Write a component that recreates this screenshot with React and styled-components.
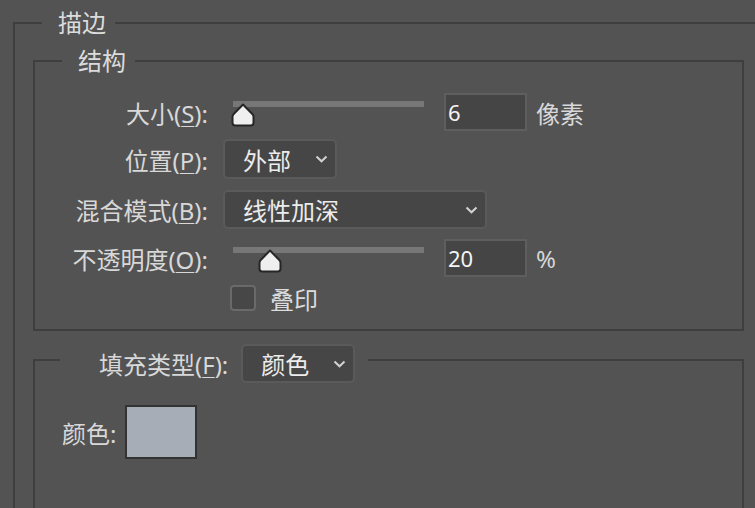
import React from "react";
import styled, { createGlobalStyle } from "styled-components";

const Global = createGlobalStyle`
  html, body { margin: 0; padding: 0; background: #535353; overflow: hidden; }
  body { font-family: "Noto Sans", "Noto Sans CJK SC", sans-serif; }
`;

const Page = styled.div`
  width: 755px;
  height: 508px;
  overflow: hidden;
  padding-top: 7px;
  box-sizing: border-box;
`;

const OuterSet = styled.fieldset`
  box-sizing: border-box;
  width: 751px;
  margin: 0 0 0 13px;
  padding: 6px 18px 0 18px;
  border: 2px solid #3e3e3e;
  min-width: 0;
`;

const Group = styled.fieldset`
  margin: ${(p) => p.$mt || 0}px 0 0 0;
  border: 2px solid #3e3e3e;
  padding: ${(p) => p.$pad};
  min-width: 0;
  min-height: ${(p) => p.$minH || 0}px;
`;

const Legend = styled.legend`
  margin-left: ${(p) => p.$ml}px;
  padding: 0 9px 0 16px;
  font-size: 24px;
  line-height: 32px;
  color: #dcdcdc;
`;

const FillLegend = styled.legend`
  margin-left: -2px;
  padding: 0 13px 0 39px;
  height: 32px;
`;

const LegendRow = styled.div`
  display: flex;
  align-items: center;
  height: 39px;
  gap: 13px;
`;

const Form = styled.div`
  display: flex;
  flex-direction: column;
`;

const Row = styled.div`
  display: flex;
  align-items: center;
  height: ${(p) => p.$h}px;
  margin-top: ${(p) => p.$mt || 0}px;
`;

const Label = styled.label`
  flex: none;
  width: ${(p) => (p.$w ? `${p.$w}px` : "auto")};
  margin-right: ${(p) => (p.$mr === undefined ? 15 : p.$mr)}px;
  text-align: right;
  font-size: 24px;
  color: #d8d8d8;
  white-space: nowrap;
`;

const U = styled.span`
  text-decoration: underline;
  text-underline-offset: 3px;
  text-decoration-thickness: 1px;
`;

const SliderWrap = styled.div`
  position: relative;
  flex: none;
  align-self: flex-start;
  margin: 8px 0 0 10px;
  width: 191px;
  height: 26px;
`;

const Track = styled.div`
  height: 6px;
  background: #777777;
`;

const Thumb = styled.svg`
  position: absolute;
  top: 2px;
  width: 24px;
  height: 24px;
  display: block;
`;

const NumBox = styled.div`
  flex: none;
  margin-left: 20px;
  width: 83px;
  height: 38px;
  box-sizing: border-box;
  border: 2px solid #5e5e5e;
  background: #454545;
  color: #f4f4f4;
  font-size: 22px;
  padding-left: 2px;
  display: flex;
  align-items: center;
`;

const Unit = styled.span`
  margin-left: 9px;
  font-size: 24px;
  color: #d8d8d8;
`;

const Select = styled.div`
  flex: none;
  width: ${(p) => p.$w}px;
  height: ${(p) => p.$h}px;
  box-sizing: border-box;
  border: 2px solid #5a5a5a;
  border-radius: 5px;
  background: #464646;
  display: flex;
  align-items: center;
  justify-content: space-between;
  padding: 0 7px 0 18px;
  color: #ececec;
  font-size: 24px;
`;

const Chevron = styled.svg`
  width: 13px;
  height: 8px;
  display: block;
`;

const Check = styled.div`
  flex: none;
  margin-left: 7px;
  width: 26px;
  height: 26px;
  box-sizing: border-box;
  border: 2px solid #6a6a6a;
  border-radius: 4px;
  background: #474747;
`;

const CheckText = styled.span`
  margin-left: 14px;
  font-size: 24px;
  color: #dcdcdc;
`;

const ColorRow = styled.div`
  display: flex;
  align-items: center;
`;

const Swatch = styled.div`
  flex: none;
  margin-left: 9px;
  width: 72px;
  height: 54px;
  box-sizing: border-box;
  border: 2px solid #333333;
  background: #a6adb7;
`;

const Slider = ({ thumb }) => (
  <SliderWrap>
    <Track />
    <Thumb viewBox="0 0 24 24" style={{ left: thumb }}>
      <path
        d="M12 1.5 L21.3 11 Q22.5 12.2 22.5 13.8 V19.8 Q22.5 22.5 19.8 22.5 H4.2 Q1.5 22.5 1.5 19.8 V13.8 Q1.5 12.2 2.7 11 Z"
        fill="#efefef"
        stroke="#262626"
        strokeWidth="2"
        strokeLinejoin="round"
      />
    </Thumb>
  </SliderWrap>
);

const Dropdown = ({ w, h = 40, children }) => (
  <Select $w={w} $h={h}>
    <span>{children}</span>
    <Chevron viewBox="0 0 13 8">
      <polyline points="1.5,1.5 6.5,6.3 11.5,1.5" fill="none" stroke="#d2d2d2" strokeWidth="2" />
    </Chevron>
  </Select>
);

export default function App() {
  return (
    <Page>
      <Global />
      <OuterSet>
        <Legend $ml={9}>描边</Legend>
        <Group $pad="16px 0 18px 0">
          <Legend $ml={27}>结构</Legend>
          <Form>
            <Row $h={38}>
              <Label $w={173}>
                大小(<U>S</U>):
              </Label>
              <Slider thumb={-2} />
              <NumBox>6</NumBox>
              <Unit>像素</Unit>
            </Row>
            <Row $h={40} $mt={8}>
              <Label $w={173}>
                位置(<U>P</U>):
              </Label>
              <Dropdown w={114}>外部</Dropdown>
            </Row>
            <Row $h={39} $mt={11}>
              <Label $w={173}>
                混合模式(<U>B</U>):
              </Label>
              <Dropdown w={264} h={39}>线性加深</Dropdown>
            </Row>
            <Row $h={38} $mt={10}>
              <Label $w={173}>
                不透明度(<U>O</U>):
              </Label>
              <Slider thumb={25} />
              <NumBox>20</NumBox>
              <Unit>%</Unit>
            </Row>
            <Row $h={26} $mt={8}>
              <Label $w={173}></Label>
              <Check />
              <CheckText>叠印</CheckText>
            </Row>
          </Form>
        </Group>
        <Group $mt={13} $pad="29px 0 0 27px" $minH={200}>
          <FillLegend>
            <LegendRow>
              <Label $mr={0}>
                填充类型(<U>F</U>):
              </Label>
              <Dropdown w={114} h={39}>颜色</Dropdown>
            </LegendRow>
          </FillLegend>
          <ColorRow>
            <Label $mr={0}>颜色:</Label>
            <Swatch />
          </ColorRow>
        </Group>
      </OuterSet>
    </Page>
  );
}
